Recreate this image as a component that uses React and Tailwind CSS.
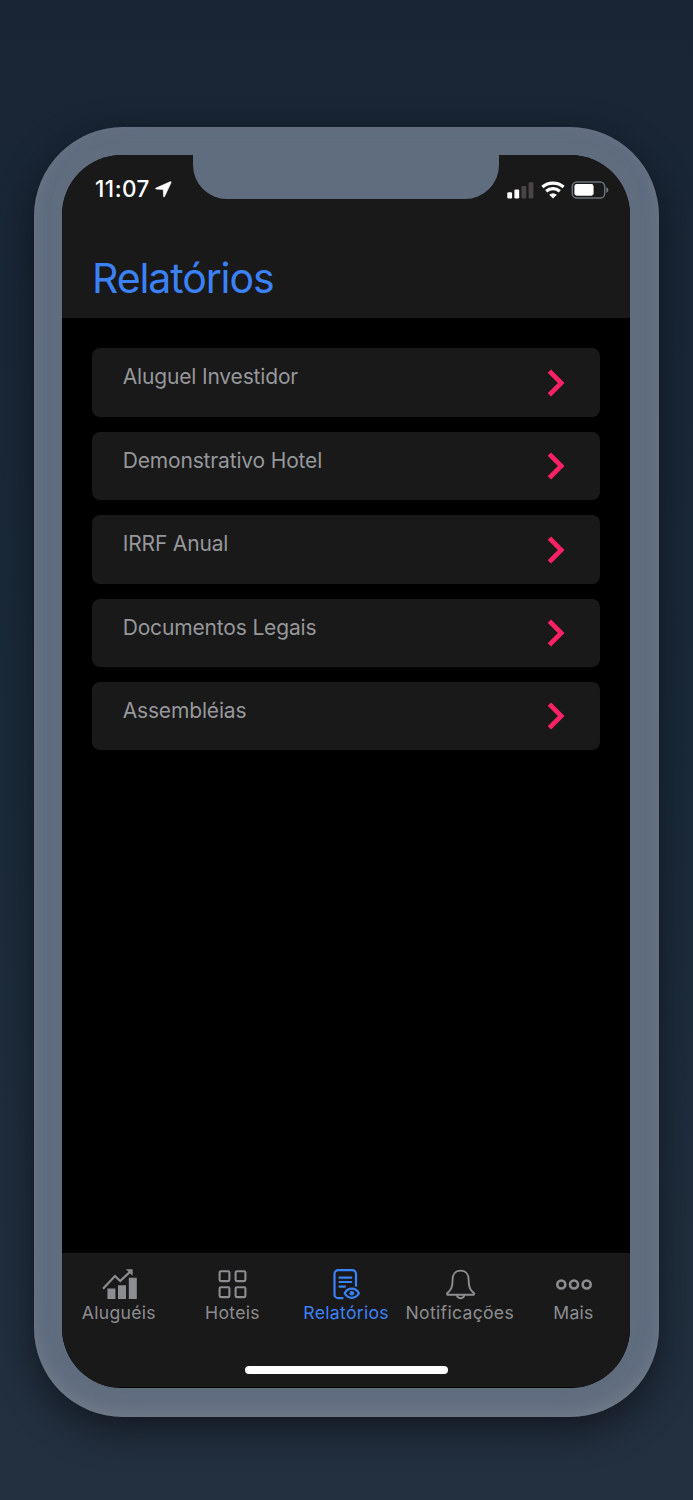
const reports = [
    'Aluguel Investidor',
    'Demonstrativo Hotel',
    'IRRF Anual',
    'Documentos Legais',
    'Assembléias'
]

const tabs = [
    { label: 'Aluguéis', icon: ChartIcon },
    { label: 'Hoteis', icon: GridIcon },
    { label: 'Relatórios', icon: ReportIcon, active: true },
    { label: 'Notificações', icon: BellIcon },
    { label: 'Mais', icon: MoreIcon }
]

function ChartIcon() {
    return (
        <svg width="36" height="32" viewBox="0 0 36 32" fill="none">
            <path d="M2 20.8 14 8 19.2 13 29.5 3.4" stroke="currentColor" strokeWidth="2.2" />
            <path d="M24.8 1.2H31.6V7.8Z" fill="currentColor" />
            <path d="M6.4 20.4H14.4V31H6.4ZM17 17.2H25V31H17ZM27.8 9.8H35.8V31H27.8Z" fill="currentColor" />
        </svg>
    )
}

function GridIcon() {
    return (
        <svg width="30" height="32" viewBox="0 0 30 32" fill="none" stroke="currentColor" strokeWidth="2.1">
            <rect x="2.6" y="3.3" width="9.8" height="9.8" rx="1.3" />
            <rect x="18.6" y="3.3" width="9.8" height="9.8" rx="1.3" />
            <rect x="2.6" y="19.3" width="9.8" height="9.8" rx="1.3" />
            <rect x="18.6" y="19.3" width="9.8" height="9.8" rx="1.3" />
        </svg>
    )
}

function ReportIcon() {
    return (
        <svg width="28" height="32" viewBox="0 0 28 32" fill="none" stroke="currentColor" strokeWidth="2.2" strokeLinecap="round">
            <path d="M10.5 30.2H6.3A3.8 3.8 0 0 1 2.5 26.4V5.9A3.8 3.8 0 0 1 6.3 2.1H20.2A3.8 3.8 0 0 1 24 5.9V17.8" />
            <path d="M7.5 9.7H19.2M7.5 14H19.2M7.5 18.6H13" />
            <path d="M12.7 25.2C14.4 22.2 16.7 20.7 19.8 20.7S25.2 22.2 26.9 25.2C25.2 28.2 22.8 29.8 19.8 29.8S14.4 28.2 12.7 25.2Z" strokeLinejoin="round" />
            <circle cx="19.8" cy="25.2" r="2.3" fill="currentColor" stroke="none" />
        </svg>
    )
}

function BellIcon() {
    return (
        <svg width="32" height="32" viewBox="0 0 32 32" fill="none" stroke="currentColor" strokeWidth="1.9" strokeLinejoin="round">
            <path d="M16.6 2.6C11.6 2.6 8.6 6.1 8.6 11.5C8.6 19.3 7 21.9 3.4 25Q2.6 25.9 3.5 26.7H29.7Q30.6 25.9 29.8 25C26.2 21.9 24.6 19.3 24.6 11.5C24.6 6.1 21.6 2.6 16.6 2.6Z" />
            <path d="M12.9 26.7C13.1 29.1 14.5 30.2 16.6 30.2S20.1 29.1 20.3 26.7" />
        </svg>
    )
}

function MoreIcon() {
    return (
        <svg width="38" height="32" viewBox="0 0 38 32" fill="none" stroke="currentColor" strokeWidth="2.6">
            <circle cx="7.3" cy="16.5" r="4" />
            <circle cx="20" cy="16.5" r="4" />
            <circle cx="32.7" cy="16.5" r="4" />
        </svg>
    )
}

function StatusBar() {
    return (
        <div className="flex h-[68.5px] items-center justify-between pr-[21px] pl-[33px]">
            <div className="flex items-center gap-[5px] text-white">
                <span className="text-[22.5px] leading-none font-medium tracking-[0.5px]">11:07</span>
                <svg width="17" height="17" viewBox="0 0 17 17">
                    <path d="M15.1.8.9 7.1Q0 7.8 1.1 8.1L8.2 8.5 8.6 15.5Q8.8 16.6 9.5 15.7L16.1 1.6Q16.4.3 15.1.8Z" fill="currentColor" stroke="currentColor" strokeWidth="0.6" />
                </svg>
            </div>
            <div className="flex items-center">
                <svg width="27" height="18" viewBox="0 0 27 18">
                    <rect x="0.3" y="11.2" width="4.8" height="6.3" rx="1.2" fill="#fff" />
                    <rect x="7.4" y="8.4" width="4.8" height="9.1" rx="1.2" fill="#fff" />
                    <rect x="14.5" y="4.9" width="4.8" height="12.6" rx="1.2" fill="#494445" />
                    <rect x="21.6" y="1.2" width="4.8" height="16.3" rx="1.2" fill="#494445" />
                </svg>
                <svg className="ml-[7px]" width="24" height="18" viewBox="0 0 24 18" fill="none" stroke="#fff" strokeWidth="3.3">
                    <path d="M1.4 6C7.4.8 16.6.8 22.6 6" />
                    <path d="M5.2 10.3C9.1 6.8 14.9 6.8 18.8 10.3" />
                    <path d="M8.2 13.8Q12 10.6 15.8 13.8L12 17.6Z" fill="#fff" stroke="none" />
                </svg>
                <svg className="ml-[6px]" width="38" height="18" viewBox="0 0 38 18">
                    <rect x="1.3" y="1" width="32.4" height="16" rx="4.6" fill="none" stroke="#6a707b" strokeWidth="1.5" />
                    <rect x="3.4" y="3.1" width="19.2" height="11.6" rx="2.4" fill="#fff" />
                    <path d="M35.3 6.2Q37.4 7 37.4 9T35.3 11.8Z" fill="#74767b" />
                </svg>
            </div>
        </div>
    )
}

function ReportCard({ title }) {
    return (
        <button className="flex h-[68.4px] w-full shrink-0 items-start justify-between rounded-[8px] bg-[#191919] pt-[15px] pr-[35px] pl-[30.5px] text-left">
            <span className="text-[21px] leading-[27px] tracking-[-0.16px] text-[#96979b]">{title}</span>
            <svg className="mt-[5.5px]" width="18" height="28" viewBox="0 0 18 28" fill="none" stroke="#ff2165" strokeWidth="4.7">
                <path d="M2.4 2.2 14.2 14 2.4 25.8" />
            </svg>
        </button>
    )
}

export default function App() {
    return (
        <div className="flex h-[1500px] w-[693px] justify-center overflow-hidden bg-linear-to-b from-[#192534] via-[#1a2a39] to-[#23303f] pt-[127.3px] font-['Inter',sans-serif]">
            <div className="h-[1289.5px] w-[625px] rounded-[89px] bg-[#606d7f] p-[28px] shadow-[0_12px_35px_rgba(10,12,18,0.65),inset_0_-14px_24px_-8px_rgba(140,145,150,0.35),inset_0_0_14px_rgba(120,130,145,0.35)]">
                <div className="relative flex h-[1233px] w-[568.3px] flex-col overflow-hidden rounded-[60px] bg-black">
                    {/* Notch */}
                    <div className="absolute top-[-1px] left-[131px] h-[45px] w-[306px] rounded-b-[34px] bg-[#606d7f]" />

                    {/* Header */}
                    <header className="h-[163px] bg-[#191919]">
                        <StatusBar />
                        <h1 className="mt-[28px] pl-[30px] text-[41px] leading-[52px] tracking-[-1.1px] text-[#3b82f7]">
                            Relatórios
                        </h1>
                    </header>

                    {/* Reports */}
                    <main className="flex flex-1 flex-col gap-[15px] px-[30.2px] pt-[30.1px]">
                        {reports.map((title) => (
                            <ReportCard key={title} title={title} />
                        ))}
                    </main>

                    {/* Tab bar */}
                    <nav className="mb-[1.5px] flex h-[134px] flex-col items-center justify-between bg-[#191919] pt-[15.3px] pb-[13px]">
                        <div className="grid w-full grid-cols-5">
                            {tabs.map(({ label, icon: Icon, active }) => (
                                <div
                                    key={label}
                                    className={`flex flex-col items-center gap-[1.2px] ${active ? 'text-[#3b82f7]' : 'text-[#8c8d91]'}`}
                                >
                                    <Icon />
                                    <span className="text-[17.6px] leading-[24px] tracking-[0.3px] whitespace-nowrap">{label}</span>
                                </div>
                            ))}
                        </div>
                        <div className="h-[7.5px] w-[203px] rounded-full bg-white" />
                    </nav>
                </div>
            </div>
        </div>
    )
}
